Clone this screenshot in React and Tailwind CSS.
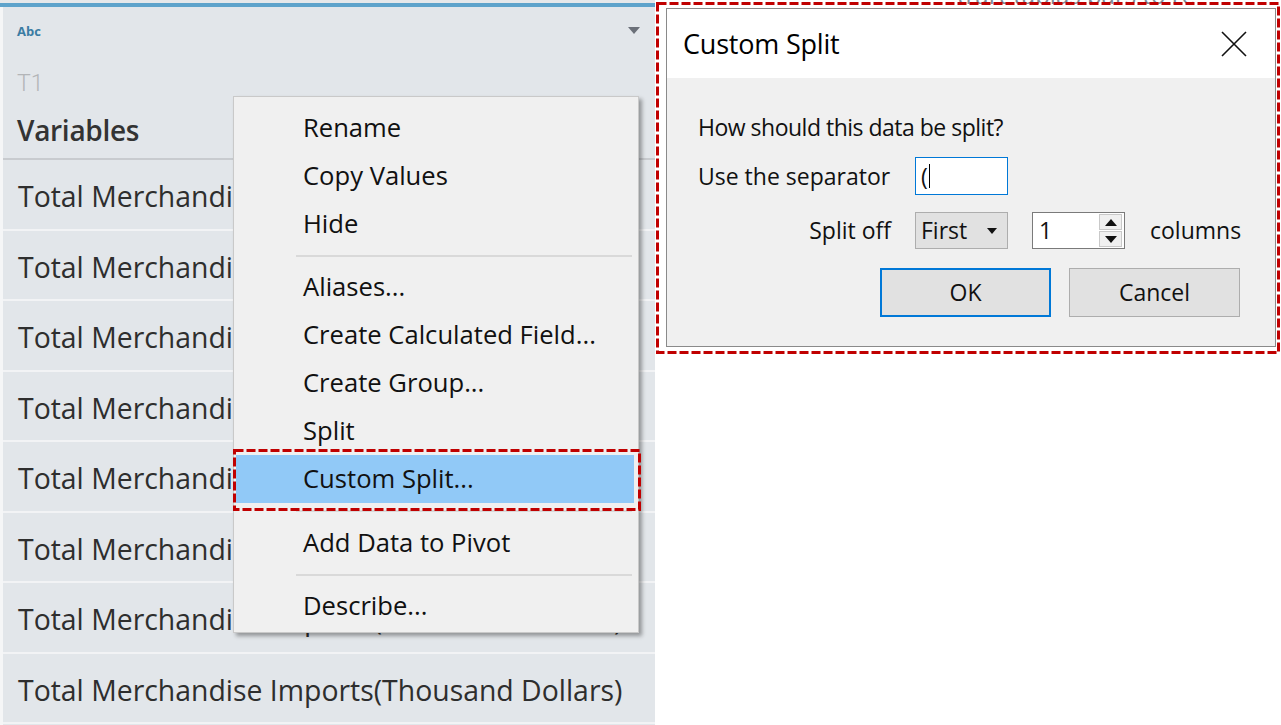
import React from "react";

const rows = [
  "Total Merchandise Imports(Thousand Dollars)",
  "Total Merchandise Imports(Thousand Dollars)",
  "Total Merchandise Imports(Thousand Dollars)",
  "Total Merchandise Imports(Thousand Dollars)",
  "Total Merchandise Imports(Thousand Dollars)",
  "Total Merchandise Imports(Thousand Dollars)",
  "Total Merchandise Imports(Thousand Dollars)",
  "Total Merchandise Imports(Thousand Dollars)",
];

function MenuItem({ label, active }) {
  return (
    <div
      className={
        "h-[48px] ml-[2px] mr-[4px] flex items-center pl-[67px] " +
        (active ? "bg-[#91c9f7]" : "")
      }
    >
      <span className="text-[25.6px] text-[#111] leading-none">{label}</span>
    </div>
  );
}

function Sep({ h }) {
  return (
    <div className={"flex items-center pl-[62px] pr-[6px] " + h}>
      <div className="h-[2px] w-full bg-[#d9d9d9]" />
    </div>
  );
}

function DashBox({ className, w, h }) {
  return (
    <svg
      className={"absolute pointer-events-none " + className}
      width={w}
      height={h}
      viewBox={`0 0 ${w} ${h}`}
    >
      <rect
        x="1.5"
        y="1.5"
        width={w - 3}
        height={h - 3}
        fill="none"
        stroke="#c00000"
        strokeWidth="3"
        strokeDasharray="9 3"
      />
    </svg>
  );
}

export default function App() {
  return (
    <div
      className="relative w-[1281px] h-[725px] bg-white flex overflow-hidden"
      style={{ fontFamily: '"Open Sans", "Noto Sans", sans-serif' }}
    >
      {/* Left data panel */}
      <div className="w-[655px] flex flex-col shrink-0">
        <div className="h-[3px] bg-[#e6e8ea]" />
        <div className="h-[4px] bg-[#5ea3cb]" />
        <div className="flex-1 flex flex-col border-l-[3px] border-[#f5f6f7] bg-[#e2e6ea]">
          <div className="h-[151px] flex flex-col pl-[14px] pr-[15px]">
            <div className="mt-[16px] h-[16px] flex items-center justify-between">
              <span className="text-[13px] font-bold text-[#3b7ca3] leading-none">Abc</span>
              <svg width="12" height="8" viewBox="0 0 12 8">
                <path d="M0 0 L12 0 L6 7 Z" fill="#6b7079" />
              </svg>
            </div>
            <div className="mt-[32px] h-[24px] flex items-center">
              <span className="text-[23px] text-[#b3b5b8] leading-none" style={{ fontFamily: '"Roboto", sans-serif', fontWeight: 300 }}>T1</span>
            </div>
            <div className="mt-[19px] h-[32px] flex items-center">
              <span className="text-[28px] font-semibold text-[#333] leading-none tracking-[-0.3px]">Variables</span>
            </div>
          </div>
          <div className="h-[2px] bg-[#c8cbcf]" />
          {rows.map((r, i) => (
            <div
              key={i}
              className="h-[70.5px] border-b-2 border-[#f2f3f5] flex items-center pl-[15px] pt-[4px]"
            >
              <span className="text-[28.4px] text-[#2e2e2e] leading-none whitespace-nowrap">{r}</span>
            </div>
          ))}
        </div>
      </div>

      {/* Right area with dialog */}
      <div className="flex-1 flex flex-col pl-[2px]">
        <div className="h-[8px] overflow-hidden pl-[300px]">
          <div className="mt-[-17px] text-[24px] text-[#7d8a96] whitespace-nowrap leading-[24px]">
            trart tablas bars to re
          </div>
        </div>
        <div
          className="ml-[9px] w-[610px] h-[339px] border border-[#8a8a8a] flex flex-col bg-[#f0f0f0]"
          style={{ fontFamily: '"Open Sans", "Noto Sans", sans-serif' }}
        >
          <div className="h-[69px] bg-white flex items-center justify-between pl-[16px] pr-[28px]">
            <span className="text-[27px] text-black leading-none tracking-[-0.2px]">Custom Split</span>
            <svg width="26" height="26" viewBox="0 0 26 26">
              <path d="M1 1 L25 25 M25 1 L1 25" stroke="#111" strokeWidth="1.6" />
            </svg>
          </div>
          <div className="flex-1 flex flex-col pl-[31px] text-[23px] text-[#111]">
            <div className="mt-[34px] h-[30px] flex items-center leading-none tracking-[-0.5px]">
              How should this data be split?
            </div>
            <div className="mt-[15px] h-[38px] flex items-center">
              <span className="w-[217px] leading-none">Use the separator</span>
              <div className="w-[93px] h-[38px] border border-[#0078d7] bg-white flex items-center pl-[5px]">
                <span className="leading-none">(</span>
                <span className="w-[1px] h-[24px] bg-black ml-[1px]" />
              </div>
            </div>
            <div className="mt-[17px] h-[37px] flex items-center">
              <span className="w-[217px] text-right pr-[24px] leading-none">Split off</span>
              <div className="w-[93px] h-[37px] border border-[#adadad] bg-[#e1e1e1] flex items-center justify-between pl-[5px] pr-[10px]">
                <span className="leading-none">First</span>
                <svg width="10" height="6" viewBox="0 0 10 6">
                  <path d="M0 0 L10 0 L5 6 Z" fill="#111" />
                </svg>
              </div>
              <div className="ml-[24px] w-[93px] h-[37px] border border-[#7a7a7a] bg-white flex items-stretch">
                <span className="flex-1 flex items-center pl-[6px] leading-none">1</span>
                <div className="w-[23px] mr-[2px] my-[1px] flex flex-col gap-[1px]">
                  <div className="flex-1 bg-[#f0f0f0] border border-[#c9c9c9] flex items-center justify-center">
                    <svg width="12" height="7" viewBox="0 0 12 7">
                      <path d="M0 7 L12 7 L6 0 Z" fill="#111" />
                    </svg>
                  </div>
                  <div className="flex-1 bg-[#f0f0f0] border border-[#c9c9c9] flex items-center justify-center">
                    <svg width="12" height="7" viewBox="0 0 12 7">
                      <path d="M0 0 L12 0 L6 7 Z" fill="#111" />
                    </svg>
                  </div>
                </div>
              </div>
              <span className="ml-[25px] leading-none">columns</span>
            </div>
            <div className="mt-[19px] flex justify-end pr-[35px] gap-[18px]">
              <div className="w-[171px] h-[49px] border-2 border-[#0078d7] bg-[#e1e1e1] flex items-center justify-center leading-none">
                OK
              </div>
              <div className="w-[171px] h-[49px] border border-[#adadad] bg-[#e1e1e1] flex items-center justify-center leading-none">
                Cancel
              </div>
            </div>
          </div>
        </div>
      </div>

      {/* Context menu */}
      <div
        className="absolute left-[233px] top-[96px] w-[406px] border border-[#c9c9c9] bg-[#f0f0f0] pt-[7px] pb-[2px] shadow-[3px_3px_4px_rgba(0,0,0,0.35)]"
        style={{ fontFamily: '"Open Sans", "Noto Sans", sans-serif' }}
      >
        <MenuItem label="Rename" />
        <MenuItem label="Copy Values" />
        <MenuItem label="Hide" />
        <Sep h="h-[15px]" />
        <MenuItem label="Aliases..." />
        <MenuItem label="Create Calculated Field..." />
        <MenuItem label="Create Group..." />
        <MenuItem label="Split" />
        <MenuItem label="Custom Split..." active />
        <Sep h="h-[16px]" />
        <MenuItem label="Add Data to Pivot" />
        <Sep h="h-[15px]" />
        <MenuItem label="Describe..." />
      </div>

      {/* Annotation outlines */}
      <DashBox className="left-[233px] top-[449px]" w={408} h={62} />
      <DashBox className="left-[656px] top-[2px]" w={624} h={352} />
    </div>
  );
}
